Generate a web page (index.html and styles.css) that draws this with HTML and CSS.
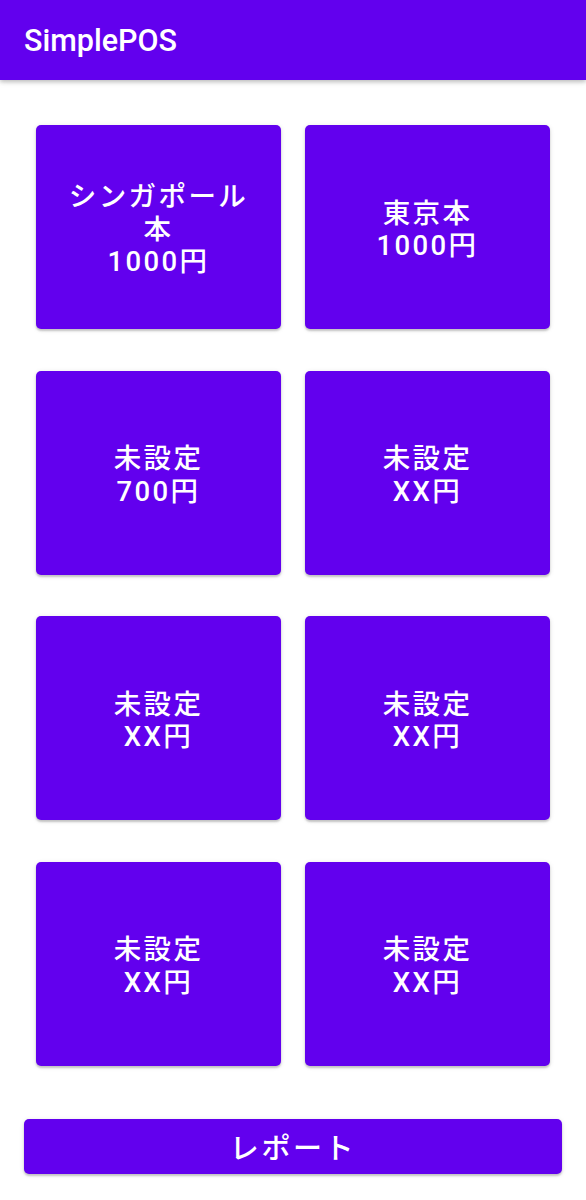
FILE: index.html
```html
<!DOCTYPE html>
<html lang="ja">
<head>
<meta charset="utf-8">
<title>SimplePOS</title>
<link rel="stylesheet" href="styles.css">
</head>
<body>
<header class="app-bar"><span class="app-title">SimplePOS</span></header>
<main class="content">
  <div class="grid">
    <button class="item">シンガポール<br>本<br>1000円</button>
    <button class="item">東京本<br>1000円</button>
    <button class="item">未設定<br>700円</button>
    <button class="item">未設定<br>XX円</button>
    <button class="item">未設定<br>XX円</button>
    <button class="item">未設定<br>XX円</button>
    <button class="item">未設定<br>XX円</button>
    <button class="item">未設定<br>XX円</button>
  </div>
  <button class="report">レポート</button>
</main>
</body>
</html>
```

FILE: styles.css
```css
html, body {
  margin: 0;
  padding: 0;
  background: #ffffff;
}
body {
  font-family: Roboto, "Noto Sans CJK JP", sans-serif;
  width: 586px;
  height: 1200px;
  overflow: hidden;
}
.app-bar {
  height: 80px;
  background: #6200ee;
  display: flex;
  align-items: center;
  padding-left: 24px;
  box-shadow: 0 2px 4px rgba(0,0,0,0.2), 0 1px 8px rgba(0,0,0,0.1);
  position: relative;
  z-index: 1;
}
.app-title {
  color: #ffffff;
  font-size: 30.5px;
  font-weight: 500;
}
.content {
  padding: 45px 24px 0;
  display: flex;
  flex-direction: column;
}
.grid {
  margin: 0 12px;
  display: grid;
  grid-template-columns: 245px 245px;
  grid-template-rows: repeat(4, 204px);
  column-gap: 24px;
  row-gap: 41.67px;
}
.item, .report {
  border: none;
  background: #6200ee;
  color: #ffffff;
  font-family: Roboto, "Noto Sans CJK JP", sans-serif;
  font-weight: 500;
  border-radius: 5px;
  padding: 0;
  margin: 0;
  box-shadow: 0 2px 2px rgba(0,0,0,0.18), 0 1px 5px rgba(0,0,0,0.12);
}
.item {
  font-size: 27.5px;
  line-height: 32.5px;
  letter-spacing: 2.4px;
  text-align: center;
  padding-top: 6px;
}
.report {
  margin-top: 53px;
  height: 55px;
  font-size: 29px;
  letter-spacing: 2.6px;
}
```
